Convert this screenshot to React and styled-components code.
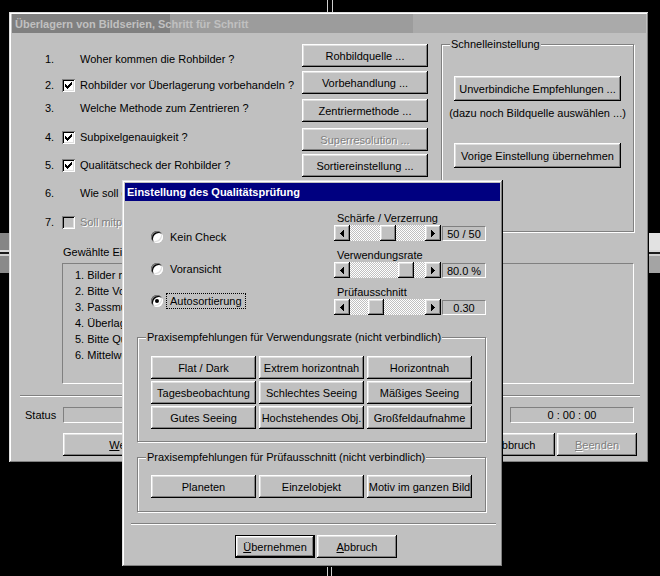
import React from 'react';
import styled, { createGlobalStyle, css } from 'styled-components';

const GlobalStyle = createGlobalStyle`
  html, body { margin: 0; padding: 0; background: #000; }
  body {
    font-family: "Liberation Sans", Arial, sans-serif;
    font-size: 11px;
    color: #000;
    overflow: hidden;
  }
  * { box-sizing: border-box; }
`;

const FONT = `"Liberation Sans", Arial, sans-serif`;

const raised = css`
  box-shadow: inset -1px -1px #000, inset 1px 1px #fff, inset -2px -2px #808080, inset 2px 2px #dfdfdf;
`;

const Desktop = styled.div`
  position: relative;
  width: 660px;
  height: 576px;
  background: #000;
  overflow: hidden;
`;

/* decorations of the picture behind the windows */
const VLine = styled.div`
  position: absolute;
  left: ${p => p.$x}px;
  top: ${p => p.$y}px;
  width: 1px;
  height: ${p => p.$h}px;
  background: #cfcfcf;
`;

const SideBar = styled.div`
  position: absolute;
  left: ${p => p.$x}px;
  top: 233px;
  width: ${p => p.$w}px;
  height: 40px;
  background: linear-gradient(
    to bottom,
    ${p => p.$c} 0 17px,
    #d8d8d8 17px 19px,
    #1a1a1a 19px 21px,
    #d0d0d0 21px 23px,
    ${p => p.$c2} 23px
  );
`;

const Window = styled.div`
  position: absolute;
  left: ${p => p.$x}px;
  top: ${p => p.$y}px;
  width: ${p => p.$w}px;
  height: ${p => p.$h}px;
  background: #c0c0c0;
  box-shadow: inset -1px -1px #000, inset 1px 1px #dfdfdf, inset -2px -2px #808080, inset 2px 2px #fff;
  padding: ${p => (p.$active ? '3px' : '2px 3px 3px')};
  display: flex;
  flex-direction: column;
`;

const TitleBar = styled.div`
  height: ${p => (p.$active ? 18 : 19)}px;
  flex: 0 0 auto;
  display: flex;
  align-items: center;
  padding-left: ${p => (p.$active ? 2 : 3)}px;
  font-family: ${FONT};
  font-weight: bold;
  font-size: 11px;
  white-space: nowrap;
  overflow: hidden;
  color: ${p => (p.$active ? '#fff' : '#c0c0c0')};
  background: ${p =>
    p.$active
      ? '#000080'
      : 'linear-gradient(90deg, #808080 0 158px, #9c9c9c 158px 401px, #aaaaaa 401px)'};
`;

const Body = styled.div`
  flex: 1;
  display: flex;
  flex-direction: column;
`;

/* ---------- main window ---------- */
const TopSection = styled.div`
  display: flex;
  height: 199px;
`;

const QuestionCol = styled.div`
  width: 290px;
  padding-left: 33px;
  display: flex;
  flex-direction: column;
`;

const QRow = styled.div`
  display: flex;
  align-items: center;
  height: 16px;
  margin-top: ${p => p.$mt}px;
  white-space: nowrap;
`;

const QNum = styled.span`
  width: 17px;
  flex: 0 0 17px;
`;

const CheckSlot = styled.span`
  width: 18px;
  flex: 0 0 18px;
  display: flex;
  align-items: center;
`;

const CheckBox = styled.span`
  width: 13px;
  height: 13px;
  display: inline-flex;
  align-items: center;
  justify-content: center;
  background: ${p => (p.$disabled ? '#c0c0c0' : '#fff')};
  box-shadow: inset 1px 1px #808080, inset -1px -1px #fff, inset 2px 2px #000, inset -2px -2px #dfdfdf;
`;

const Text = styled.span`
  ${p =>
    p.$disabled &&
    css`
      color: #808080;
      text-shadow: 1px 1px #fff;
    `}
`;

const ButtonCol = styled.div`
  width: 126px;
  display: flex;
  flex-direction: column;
`;

const Button = styled.button`
  font-family: ${FONT};
  font-size: 11px;
  color: #000;
  background: #c0c0c0;
  border: none;
  padding: 0;
  margin: 0;
  margin-top: ${p => p.$mt || 0}px;
  width: ${p => p.$w}px;
  height: ${p => p.$h || 23}px;
  flex: 0 0 auto;
  white-space: nowrap;
  ${raised}
  ${p =>
    p.$default &&
    css`
      box-shadow: inset 0 0 0 1px #000, inset -2px -2px #000, inset 2px 2px #fff,
        inset -3px -3px #808080, inset 3px 3px #dfdfdf;
    `}
  ${p =>
    p.disabled &&
    css`
      color: #808080;
      text-shadow: 1px 1px #fff;
    `}
  u { text-decoration: underline; text-underline-offset: 1px; }
`;

const GroupBox = styled.div`
  position: relative;
  width: ${p => p.$w}px;
  height: ${p => p.$h}px;
  margin-left: ${p => p.$ml || 0}px;
  margin-top: ${p => p.$mt || 0}px;
  border: 1px solid #808080;
  box-shadow: inset 1px 1px #fff, 1px 1px #fff;
  flex: 0 0 auto;
`;

const Legend = styled.span`
  position: absolute;
  left: ${p => p.$x || 8}px;
  top: -7px;
  line-height: 13px;
  padding: 0 1px;
  background: #c0c0c0;
  white-space: nowrap;
`;

const QuickInner = styled.div`
  display: flex;
  flex-direction: column;
  align-items: center;
  padding-top: 31px;
`;

const Hint = styled.div`
  line-height: 13px;
  margin-top: 6px;
  margin-bottom: 23px;
  white-space: nowrap;
`;

const ListLabel = styled.div`
  margin-left: 51px;
  margin-top: 14px;
  line-height: 13px;
`;

const ListBox = styled.div`
  margin-left: 50px;
  margin-top: 4px;
  width: 572px;
  height: 121px;
  border: 1px solid;
  border-color: #808080 #fff #fff #808080;
  padding: 3px 0 0 12px;
  overflow: hidden;
`;

const ListItem = styled.div`
  line-height: 16px;
  white-space: nowrap;
`;

const Separator = styled.div`
  margin-left: ${p => p.$ml}px;
  margin-top: ${p => p.$mt}px;
  width: ${p => p.$w}px;
  height: 2px;
  border-top: 1px solid #808080;
  border-bottom: 1px solid #fff;
  flex: 0 0 auto;
`;

const StatusRow = styled.div`
  display: flex;
  align-items: center;
  margin-top: 10px;
  padding-left: 13px;
  height: 16px;
`;

const StatusLabel = styled.span`
  width: 38px;
`;

const Field = styled.div`
  width: ${p => p.$w}px;
  height: ${p => p.$h || 16}px;
  margin-left: ${p => p.$ml || 0}px;
  border: 1px solid;
  border-color: #808080 #fff #fff #808080;
  display: flex;
  align-items: center;
  justify-content: center;
  flex: 0 0 auto;
  white-space: nowrap;
`;

const MainButtons = styled.div`
  display: flex;
  margin-top: 10px;
  padding-left: 51px;
  padding-right: 9px;
  gap: 2px;
`;

const Spacer = styled.div`
  flex: 1;
`;

/* ---------- dialog ---------- */
const DlgTop = styled.div`
  display: flex;
  height: 136px;
`;

const RadioCol = styled.div`
  width: 209px;
  padding-left: 26px;
  padding-top: 28px;
  display: flex;
  flex-direction: column;
  gap: 16px;
`;

const RadioRow = styled.div`
  display: flex;
  align-items: center;
  height: 16px;
`;

const Radio = styled.span`
  width: 12px;
  height: 12px;
  border-radius: 50%;
  background: #fff;
  box-shadow: inset 1px 1px #808080, inset -1px -1px #fff, inset 2px 2px #000, inset -2px -2px #dfdfdf;
  display: flex;
  align-items: center;
  justify-content: center;
  flex: 0 0 12px;
  &::after {
    content: '';
    width: 4px;
    height: 4px;
    border-radius: 50%;
    background: ${p => (p.$on ? '#000' : 'transparent')};
  }
`;

const RadioLabel = styled.span`
  margin-left: 3px;
  padding: 1px 3px;
  line-height: 12px;
  border: 1px dotted ${p => (p.$focus ? '#000' : 'transparent')};
  white-space: nowrap;
`;

const SliderCol = styled.div`
  padding-top: 11px;
  display: flex;
  flex-direction: column;
  gap: 8px;
`;

const SliderBlock = styled.div`
  display: flex;
  flex-direction: column;
`;

const SliderLabel = styled.div`
  line-height: 13px;
  padding-left: 3px;
  white-space: nowrap;
`;

const SliderRow = styled.div`
  display: flex;
  align-items: flex-end;
  height: 16px;
`;

const ArrowBtn = styled.span`
  width: 16px;
  height: 16px;
  flex: 0 0 16px;
  background: #c0c0c0;
  display: flex;
  align-items: center;
  justify-content: center;
  ${raised}
`;

const Track = styled.div`
  position: relative;
  width: 75px;
  height: 16px;
  flex: 0 0 75px;
  background: repeating-conic-gradient(#c0c0c0 0 25%, #fff 0 50%) 0 0 / 2px 2px;
`;

const Thumb = styled.span`
  position: absolute;
  top: 0;
  width: 16px;
  height: 16px;
  background: #c0c0c0;
  ${raised}
`;

const ValueBox = styled(Field)`
  margin-left: 1px;
`;

const PresetGrid = styled.div`
  display: grid;
  grid-template-columns: repeat(3, 105px);
  column-gap: 3px;
  row-gap: 2px;
  padding-top: ${p => p.$pt}px;
  padding-left: 13px;
`;

const DlgButtons = styled.div`
  display: flex;
  gap: 2px;
  margin-top: 10px;
  margin-left: 110px;
`;

/* ---------- icons ---------- */
const Check = () => (
  <svg width="7" height="7" viewBox="0 0 7 7" shapeRendering="crispEdges">
    <path
      fill="#000"
      d="M6 0h1v1h-1z M5 1h2v1h-2z M0 2h1v1h-1z M4 2h3v1h-3z M0 3h2v1h-2z M3 3h3v1h-3z M0 4h5v1h-5z M1 5h3v1h-3z M2 6h1v1h-1z"
    />
  </svg>
);

const Arrow = ({ dir }) => (
  <svg width="4" height="7" viewBox="0 0 4 7" shapeRendering="crispEdges">
    {dir === 'left' ? (
      <path fill="#000" d="M3 0h1v7h-1z M2 1h1v5h-1z M1 2h1v3h-1z M0 3h1v1h-1z" />
    ) : (
      <path fill="#000" d="M0 0h1v7h-1z M1 1h1v5h-1z M2 2h1v3h-1z M3 3h1v1h-1z" />
    )}
  </svg>
);

/* ---------- data ---------- */
const questions = [
  { n: '1.', text: 'Woher kommen die Rohbilder ?', box: null, mt: 18 },
  { n: '2.', text: 'Rohbilder vor Überlagerung vorbehandeln ?', box: 'on', mt: 10 },
  { n: '3.', text: 'Welche Methode zum Zentrieren ?', box: null, mt: 7 },
  { n: '4.', text: 'Subpixelgenauigkeit ?', box: 'on', mt: 13 },
  { n: '5.', text: 'Qualitätscheck der Rohbilder ?', box: 'on', mt: 12 },
  { n: '6.', text: 'Wie soll das Summenbild gespeichert werden ?', box: null, mt: 12 },
  { n: '7.', text: 'Soll mitprotokolliert werden ?', box: 'disabled', mt: 13 },
];

const stepButtons = [
  { label: 'Rohbildquelle ...', mt: 11 },
  { label: 'Vorbehandlung ...', mt: 4 },
  { label: 'Zentriermethode ...', mt: 5 },
  { label: 'Superresolution ...', mt: 6, disabled: true },
  { label: 'Sortiereinstellung ...', mt: 3 },
];

const listItems = [
  '1. Bilder mit Rohbildquelle auswählen',
  '2. Bitte Vorbehandlung einstellen',
  '3. Passmuster für Zentrierung',
  '4. Überlagerung starten',
  '5. Bitte Qualitätscheck einstellen',
  '6. Mittelwert bilden',
];

const radios = [
  { label: 'Kein Check', on: false },
  { label: 'Voransicht', on: false },
  { label: 'Autosortierung', on: true, focus: true },
];

const sliders = [
  { label: 'Schärfe / Verzerrung', value: 0.5, text: '50 / 50' },
  { label: 'Verwendungsrate', value: 0.81, text: '80.0 %' },
  { label: 'Prüfausschnitt', value: 0.3, text: '0.30' },
];

const presets1 = [
  'Flat / Dark',
  'Extrem horizontnah',
  'Horizontnah',
  'Tagesbeobachtung',
  'Schlechtes Seeing',
  'Mäßiges Seeing',
  'Gutes Seeing',
  'Hochstehendes Obj.',
  'Großfeldaufnahme',
];

const presets2 = ['Planeten', 'Einzelobjekt', 'Motiv im ganzen Bild'];

const TRACK = 75;
const THUMB = 16;

export default function App() {
  return (
    <>
      <GlobalStyle />
      <Desktop>
        <VLine $x={327} $y={0} $h={12} />
        <VLine $x={332} $y={0} $h={12} />
        <VLine $x={327} $y={566} $h={10} />
        <VLine $x={331} $y={566} $h={10} />
        <SideBar $x={0} $w={9} $c="#868686" $c2="#8a8a8a" />
        <SideBar $x={649} $w={11} $c="#e2e2e2" $c2="#a4a4a4" />

        <Window $x={9} $y={12} $w={640} $h={451}>
          <TitleBar>Überlagern von Bildserien, Schritt für Schritt</TitleBar>
          <Body>
            <TopSection>
              <QuestionCol>
                {questions.map(q => (
                  <QRow key={q.n} $mt={q.mt}>
                    <QNum>{q.n}</QNum>
                    <CheckSlot>
                      {q.box && (
                        <CheckBox $disabled={q.box === 'disabled'}>
                          {q.box === 'on' && <Check />}
                        </CheckBox>
                      )}
                    </CheckSlot>
                    <Text $disabled={q.box === 'disabled'}>{q.text}</Text>
                  </QRow>
                ))}
              </QuestionCol>
              <ButtonCol>
                {stepButtons.map(b => (
                  <Button key={b.label} $w={126} $mt={b.mt} disabled={b.disabled}>
                    {b.label}
                  </Button>
                ))}
              </ButtonCol>
              <GroupBox $w={193} $h={188} $ml={13} $mt={11}>
                <Legend>Schnelleinstellung</Legend>
                <QuickInner>
                  <Button $w={167} $h={25}>Unverbindiche Empfehlungen ...</Button>
                  <Hint>(dazu noch Bildquelle auswählen ...)</Hint>
                  <Button $w={167} $h={25}>Vorige Einstellung übernehmen</Button>
                </QuickInner>
              </GroupBox>
            </TopSection>

            <ListLabel>Gewählte Einstellungen</ListLabel>
            <ListBox>
              {listItems.map(t => (
                <ListItem key={t}>{t}</ListItem>
              ))}
            </ListBox>

            <Separator $ml={8} $mt={11} $w={620} />

            <StatusRow>
              <StatusLabel>Status</StatusLabel>
              <Field $w={437} />
              <Field $w={124} $ml={10}>0 : 00 : 00</Field>
            </StatusRow>

            <MainButtons>
              <Button $w={140}>
                <u>W</u>eiter &gt;&gt;
              </Button>
              <Spacer />
              <Button $w={80}>
                <u>A</u>bbruch
              </Button>
              <Button $w={80} disabled>
                <u>B</u>eenden
              </Button>
            </MainButtons>
          </Body>
        </Window>

        <Window $x={122} $y={180} $w={381} $h={387} $active>
          <TitleBar $active>Einstellung des Qualitätsprüfung</TitleBar>
          <Body>
            <DlgTop>
              <RadioCol>
                {radios.map(r => (
                  <RadioRow key={r.label}>
                    <Radio $on={r.on} />
                    <RadioLabel $focus={r.focus}>{r.label}</RadioLabel>
                  </RadioRow>
                ))}
              </RadioCol>
              <SliderCol>
                {sliders.map(s => (
                  <SliderBlock key={s.label}>
                    <SliderLabel>{s.label}</SliderLabel>
                    <SliderRow>
                      <ArrowBtn>
                        <Arrow dir="left" />
                      </ArrowBtn>
                      <Track>
                        <Thumb style={{ left: Math.round(s.value * (TRACK - THUMB)) }} />
                      </Track>
                      <ArrowBtn>
                        <Arrow dir="right" />
                      </ArrowBtn>
                      <ValueBox $w={44} $h={15}>{s.text}</ValueBox>
                    </SliderRow>
                  </SliderBlock>
                ))}
              </SliderCol>
            </DlgTop>

            <GroupBox $w={349} $h={105} $ml={12}>
              <Legend>Praxisempfehlungen für Verwendungsrate (nicht verbindlich)</Legend>
              <PresetGrid $pt={18}>
                {presets1.map(p => (
                  <Button key={p} $w={105}>{p}</Button>
                ))}
              </PresetGrid>
            </GroupBox>

            <GroupBox $w={349} $h={55} $ml={12} $mt={15}>
              <Legend>Praxisempfehlungen für Prüfausschnitt (nicht verbindlich)</Legend>
              <PresetGrid $pt={17}>
                {presets2.map(p => (
                  <Button key={p} $w={105}>{p}</Button>
                ))}
              </PresetGrid>
            </GroupBox>

            <Separator $ml={6} $mt={11} $w={365} />

            <DlgButtons>
              <Button $w={80} $default>
                <u>Ü</u>bernehmen
              </Button>
              <Button $w={80}>
                <u>A</u>bbruch
              </Button>
            </DlgButtons>
          </Body>
        </Window>
      </Desktop>
    </>
  );
}
